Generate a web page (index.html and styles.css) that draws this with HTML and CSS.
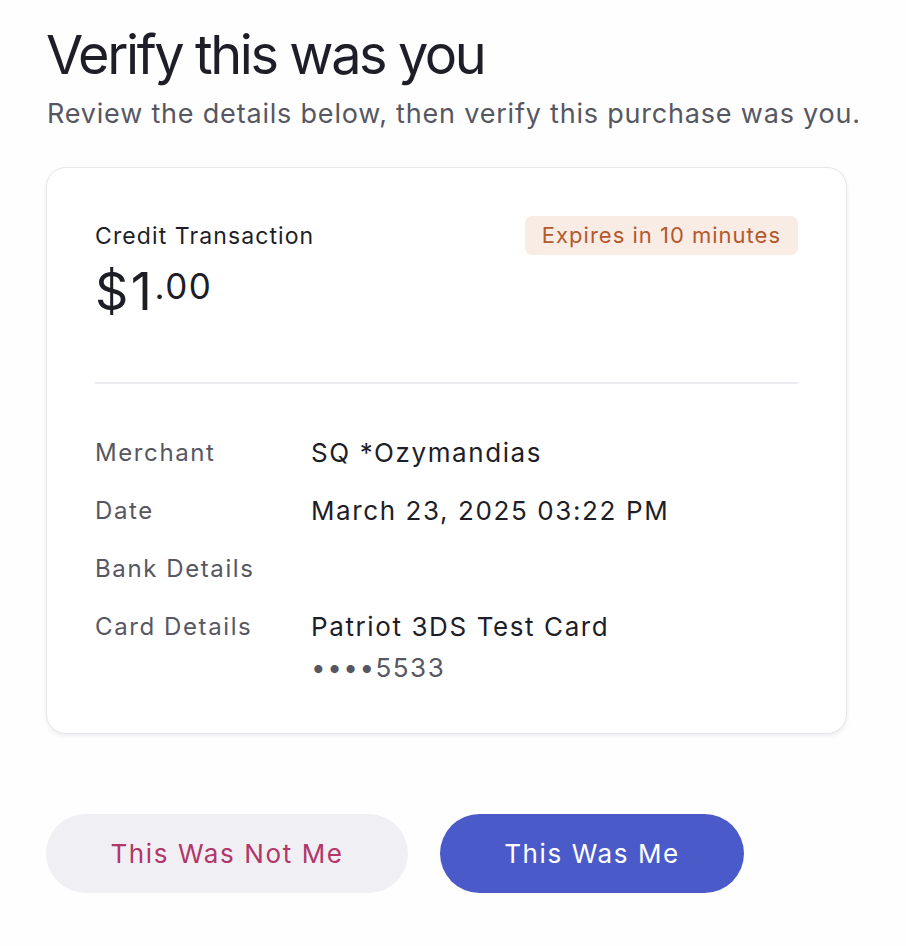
FILE: index.html
```html
<!DOCTYPE html>
<html>
<head>
<meta charset="utf-8">
<link rel="stylesheet" href="styles.css">
</head>
<body>
<main class="page">
  <h1 class="title">Verify this was you</h1>
  <p class="subtitle">Review the details below, then verify this purchase was you.</p>
  <section class="card">
    <div class="card-head">
      <div class="head-left">
        <div class="kind">Credit Transaction</div>
        <div class="amount"><span class="amount-main">$1</span><span class="amount-cents">.00</span></div>
      </div>
      <div class="badge">Expires in 10 minutes</div>
    </div>
    <hr class="divider">
    <dl class="details">
      <dt>Merchant</dt><dd>SQ *Ozymandias</dd>
      <dt>Date</dt><dd>March 23, 2025 03:22 PM</dd>
      <dt>Bank Details</dt><dd></dd>
      <dt>Card Details</dt><dd>Patriot 3DS Test Card<span class="mask">••••5533</span></dd>
    </dl>
  </section>
  <div class="actions">
    <button class="btn btn-secondary">This Was Not Me</button>
    <button class="btn btn-primary">This Was Me</button>
  </div>
</main>
</body>
</html>
```
FILE: styles.css
```css
* { box-sizing: border-box; }
html, body { margin: 0; padding: 0; background: #fefefe; }
body { font-family: Inter, "Noto Sans", sans-serif; color: #1d1d26; }
.page { padding: 22px 0 0 46px; width: 906px; }
.title { margin: 0; font-size: 54px; font-weight: 400; letter-spacing: -2.4px; line-height: 66px; color: #1e1e28; }
.subtitle { margin: 9px 0 0 1px; font-size: 27px; line-height: 34px; color: #575762; letter-spacing: 0.8px; }
.card { margin-top: 36px; width: 801px; height: 567px; border: 1px solid #e6e6eb; border-radius: 20px; background: #fff; box-shadow: 0 2px 4px rgba(40,40,80,0.08); padding: 48px 48px 0 48px; }
.card-head { display: flex; justify-content: space-between; align-items: flex-start; height: 166px; }
.kind { font-size: 23px; line-height: 40px; color: #1e1e28; letter-spacing: 1.1px; }
.amount { display: flex; align-items: flex-start; margin-top: 6px; }
.amount-main { font-size: 52px; line-height: 60px; letter-spacing: 2.5px; }
.amount-cents { font-size: 35px; line-height: 48px; letter-spacing: 1.5px; }
.badge { background: #f9ece5; color: #b4592c; font-size: 22px; line-height: 39px; padding: 0 17px; border-radius: 7px; letter-spacing: 1px; }
.divider { margin: 0; border: 0; border-top: 2px solid #ececf0; }
.details { display: grid; grid-template-columns: 216px 1fr; margin: 40px 0 0 0; row-gap: 0; }
.details dt { font-size: 24px; line-height: 58px; color: #575762; letter-spacing: 1.6px; height: 58px; }
.details dd { margin: 0; font-size: 26px; line-height: 58px; color: #1e1e28; letter-spacing: 1.6px; }
.mask { display: block; color: #575762; line-height: 28px; letter-spacing: 1.5px; margin-top: -2px; }
.actions { display: flex; gap: 32px; margin-top: 80px; }
.btn { border: 0; height: 79px; border-radius: 40px; font-family: inherit; font-size: 26px; letter-spacing: 1.6px; }
.btn-secondary { width: 362px; background: #f0f0f4; color: #b3356a; }
.btn-primary { width: 304px; background: #4a5bc9; color: #fff; }
```
